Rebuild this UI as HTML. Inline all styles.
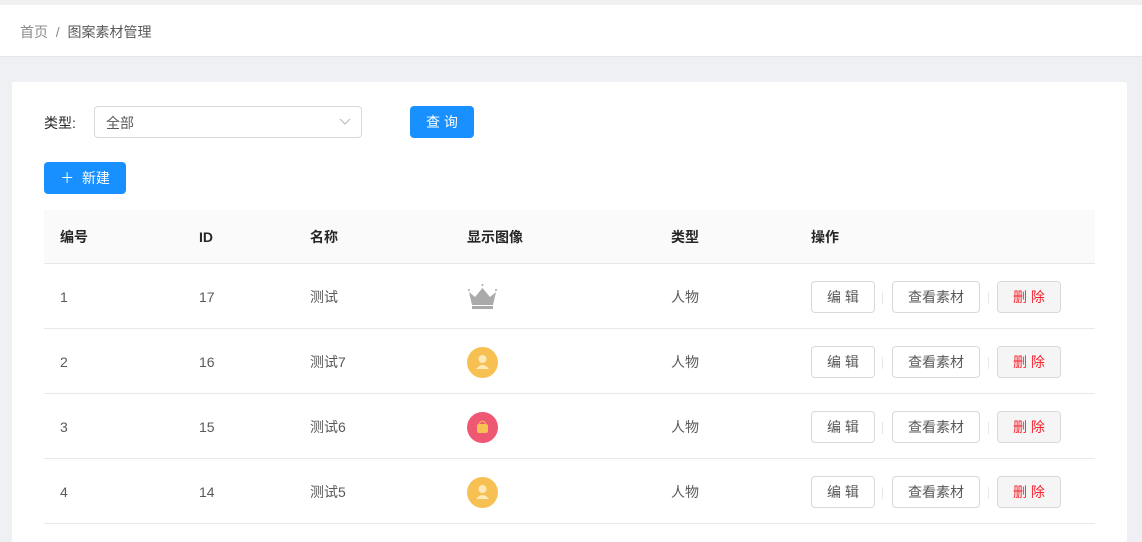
<!DOCTYPE html>
<html><head><meta charset="utf-8"><style>
*{margin:0;padding:0;box-sizing:border-box}
body{width:1142px;height:530px;overflow:hidden;background:#eef0f4;font-family:"Liberation Sans","Noto Sans CJK SC",sans-serif;font-size:14px;color:#595959;position:relative}
.top{position:absolute;left:0;top:0;width:1142px;height:5px;background:#f0f0f0}
.hdr{position:absolute;left:0;top:5px;width:1142px;height:52px;background:#fff;border-bottom:1px solid #e6e6e6}
.bc{position:absolute;left:20px;top:17px;font-size:14px;color:#8c8c8c}
.bc b{font-weight:normal;color:#595959}
.card{position:absolute;left:12px;top:82px;width:1115px;height:460px;background:#fff;border-radius:2px}
.abs{position:absolute}
.sel{left:82px;top:24px;width:268px;height:32px;border:1px solid #d9d9d9;border-radius:4px;padding:6px 11px;color:#595959}
.btn{border-radius:4px;background:#1890ff;color:#fff;text-align:center}
.th{top:128px;left:32px;width:1051px;height:54px;background:#fafafa;border-bottom:1px solid #e8e8e8}
.row{left:32px;width:1051px;height:65px;border-bottom:1px solid #e8e8e8}
.c{position:absolute;top:0;line-height:66px}
.th .c{line-height:54px;color:#262626;font-weight:bold}
.ob{position:absolute;top:17px;height:32px;border:1px solid #d9d9d9;border-radius:4px;text-align:center;line-height:30px;color:#595959;background:#fff}
.sep{position:absolute;top:28px;width:1px;height:12px;background:#e8e8e8}
.ic{position:absolute;left:423px;top:18px;width:31px;height:31px;border-radius:50%}
</style></head><body>
<div class="top"></div>
<div class="hdr"><div class="bc">首页&nbsp;&nbsp;/&nbsp;&nbsp;<b>图案素材管理</b></div></div>
<div class="card">
<div class="abs" style="left:32px;top:31px;color:#262626">类型:</div>
<div class="abs sel">全部<svg style="position:absolute;right:10px;top:11px" width="12" height="8" viewBox="0 0 12 8"><path d="M1 1l5 5 5-5" fill="none" stroke="#bfbfbf" stroke-width="1.2"/></svg></div>
<div class="abs btn" style="left:398px;top:24px;width:64px;height:32px;line-height:32px">查 询</div>
<div class="abs btn" style="left:32px;top:80px;width:82px;height:32px;line-height:32px">＋&nbsp;&nbsp;新建</div>
<div class="abs th"><div class="c" style="left:16px">编号</div><div class="c" style="left:155px">ID</div><div class="c" style="left:266px">名称</div><div class="c" style="left:423px">显示图像</div><div class="c" style="left:627px">类型</div><div class="c" style="left:767px">操作</div></div>
<div class="abs row" style="top:182px"><div class="c" style="left:16px">1</div><div class="c" style="left:155px">17</div><div class="c" style="left:266px">测试</div>
<svg style="position:absolute;left:423px;top:19px" width="31" height="28" viewBox="0 0 31 28"><circle cx="15.5" cy="2" r="1" fill="#aaa"/><circle cx="2" cy="7" r="1" fill="#aaa"/><circle cx="29" cy="7" r="1" fill="#aaa"/><path d="M2 9l6 5 7.5-9 7.5 9 6-5-3 13H5z" fill="#aaa"/><rect x="5" y="23" width="21" height="3" fill="#aaa"/></svg>
<div class="c" style="left:627px">人物</div><div class="ob" style="left:767px;width:64px">编 辑</div><div class="sep" style="left:838px"></div><div class="ob" style="left:848px;width:88px">查看素材</div><div class="sep" style="left:944px"></div><div class="ob" style="left:953px;width:64px;background:#f5f5f5;color:#f5222d">删 除</div></div>
<div class="abs row" style="top:247px"><div class="c" style="left:16px">2</div><div class="c" style="left:155px">16</div><div class="c" style="left:266px">测试7</div><div class="ic" style="background:#f7c052"><svg width="31" height="31" viewBox="0 0 31 31"><circle cx="15.5" cy="12" r="4" fill="#fde9b8"/><path d="M9 22q6.5-8 13 0z" fill="#fde9b8"/></svg></div>
<div class="c" style="left:627px">人物</div><div class="ob" style="left:767px;width:64px">编 辑</div><div class="sep" style="left:838px"></div><div class="ob" style="left:848px;width:88px">查看素材</div><div class="sep" style="left:944px"></div><div class="ob" style="left:953px;width:64px;background:#f5f5f5;color:#f5222d">删 除</div></div>
<div class="abs row" style="top:312px"><div class="c" style="left:16px">3</div><div class="c" style="left:155px">15</div><div class="c" style="left:266px">测试6</div><div class="ic" style="background:#ef5872"><svg width="31" height="31" viewBox="0 0 31 31"><rect x="10" y="12" width="11" height="9" rx="2" fill="#f7c052"/><path d="M12 12q3.5-6 7 0" fill="none" stroke="#f7c052"/></svg></div>
<div class="c" style="left:627px">人物</div><div class="ob" style="left:767px;width:64px">编 辑</div><div class="sep" style="left:838px"></div><div class="ob" style="left:848px;width:88px">查看素材</div><div class="sep" style="left:944px"></div><div class="ob" style="left:953px;width:64px;background:#f5f5f5;color:#f5222d">删 除</div></div>
<div class="abs row" style="top:377px"><div class="c" style="left:16px">4</div><div class="c" style="left:155px">14</div><div class="c" style="left:266px">测试5</div><div class="ic" style="background:#f7c052"><svg width="31" height="31" viewBox="0 0 31 31"><circle cx="15.5" cy="12" r="4" fill="#fde9b8"/><path d="M9 22q6.5-8 13 0z" fill="#fde9b8"/></svg></div>
<div class="c" style="left:627px">人物</div><div class="ob" style="left:767px;width:64px">编 辑</div><div class="sep" style="left:838px"></div><div class="ob" style="left:848px;width:88px">查看素材</div><div class="sep" style="left:944px"></div><div class="ob" style="left:953px;width:64px;background:#f5f5f5;color:#f5222d">删 除</div></div>
</div>
</body></html>
